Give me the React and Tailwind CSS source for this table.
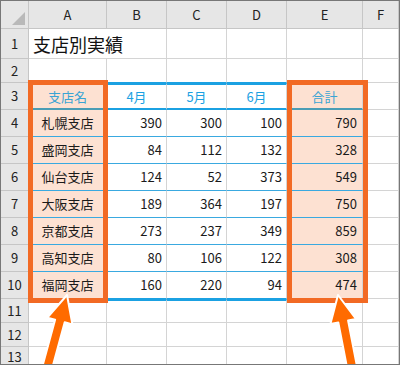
import React from "react";

const rows = [
  ["札幌支店", 390, 300, 100, 790],
  ["盛岡支店", 84, 112, 132, 328],
  ["仙台支店", 124, 52, 373, 549],
  ["大阪支店", 189, 364, 197, 750],
  ["京都支店", 273, 237, 349, 859],
  ["高知支店", 80, 106, 122, 308],
  ["福岡支店", 160, 220, 94, 474],
];

const cols = ["A", "B", "C", "D", "E", "F"];

function Hdr({ children, className = "" }) {
  return (
    <div
      className={
        "flex items-center justify-center bg-[#e6e6e6] border-r border-b border-r-[#c6c6c6] border-b-[#c6c6c6] text-[13px] text-[#222] " +
        className
      }
    >
      {children}
    </div>
  );
}

function Cell({ children, className = "", b = "border-b border-b-[#d4d4d4]", r = "border-r border-r-[#d4d4d4]" }) {
  return <div className={"flex items-center min-w-0 " + b + " " + r + " " + className}>{children}</div>;
}

export default function App() {
  const font = { fontFamily: '"Noto Sans CJK JP", "Noto Sans", sans-serif' };
  return (
    <div
      className="relative w-[400px] h-[365px] overflow-hidden border border-[#777] bg-white box-border"
      style={font}
    >
      <div className="grid h-full grid-cols-[28px_78px_60px_60px_60px_76px_1fr] grid-rows-[28px_30px_24px_repeat(8,27px)_24px_24px_1fr]">
        {/* header row */}
        <Hdr className="relative">
          <svg width="28" height="28" className="absolute inset-0">
            <polygon points="24,11 24,24 11,24" fill="#b9b9b9" />
          </svg>
        </Hdr>
        {cols.map((c) => (
          <Hdr key={c}>{c}</Hdr>
        ))}

        {/* row 1 */}
        <Hdr>1</Hdr>
        <Cell className="pl-[4px] pt-[2px] text-[18px] text-[#111] whitespace-nowrap overflow-visible" r="">
          支店別実績
        </Cell>
        <Cell />
        <Cell />
        <Cell />
        <Cell />
        <Cell />

        {/* row 2 */}
        <Hdr>2</Hdr>
        <Cell b="border-b border-b-[#1ba1e2]" />
        <Cell b="border-b border-b-[#1ba1e2]" />
        <Cell b="border-b border-b-[#1ba1e2]" />
        <Cell b="border-b border-b-[#1ba1e2]" />
        <Cell b="border-b border-b-[#1ba1e2]" />
        <Cell />

        {/* row 3 */}
        <Hdr>3</Hdr>
        <Cell
          className="justify-center bg-[#fde1d2] text-[13px] text-[#3aa4d4] border-t-2 border-t-[#1ba1e2]"
          b="border-b-2 border-b-[#4b9db5]"
        >
          支店名
        </Cell>
        {["4月", "5月", "6月"].map((m) => (
          <Cell
            key={m}
            className="justify-center text-[13px] text-[#1ba1e2] border-t-2 border-t-[#1ba1e2]"
            b="border-b-2 border-b-[#1ba1e2]"
          >
            {m}
          </Cell>
        ))}
        <Cell
          className="justify-center bg-[#fde1d2] text-[13px] text-[#3aa4d4] border-t-2 border-t-[#1ba1e2]"
          b="border-b-2 border-b-[#4b9db5]"
        >
          合計
        </Cell>
        <Cell />

        {/* data rows */}
        {rows.map((r, i) => {
          const last = i === rows.length - 1;
          const b = last ? "border-b border-b-[#1ba1e2]" : "border-b border-b-[#3aa9e0]";
          return (
            <React.Fragment key={r[0]}>
              <Hdr>{i + 4}</Hdr>
              <Cell className="justify-center bg-[#fde1d2] text-[13px] text-[#1a1a1a]" b={b}>
                {r[0]}
              </Cell>
              {r.slice(1, 4).map((v, j) => (
                <Cell key={j} className="justify-end pr-[4px] text-[13px] text-[#1a1a1a]" b={b}>
                  {v}
                </Cell>
              ))}
              <Cell className="justify-end pr-[5px] bg-[#fde1d2] text-[13px] text-[#1a1a1a]" b={b}>
                {r[4]}
              </Cell>
              <Cell />
            </React.Fragment>
          );
        })}

        {/* rows 11-13 */}
        {[11, 12, 13].map((n) => (
          <React.Fragment key={n}>
            <Hdr>{n}</Hdr>
            <Cell />
            <Cell className={n === 11 ? "border-t-2 border-t-[#1ba1e2]" : ""} />
            <Cell className={n === 11 ? "border-t-2 border-t-[#1ba1e2]" : ""} />
            <Cell className={n === 11 ? "border-t-2 border-t-[#1ba1e2]" : ""} />
            <Cell />
            <Cell />
          </React.Fragment>
        ))}
      </div>

      {/* orange highlight boxes */}
      <div className="absolute left-[27px] top-[79px] w-[80px] h-[223px] border-[5px] border-[#f26a24] pointer-events-none" />
      <div className="absolute left-[286px] top-[79px] w-[81px] h-[223px] border-[5px] border-[#f26a24] pointer-events-none" />

      {/* arrows */}
      <svg className="absolute left-[-1px] top-[-1px] pointer-events-none" width="400" height="365" viewBox="0 0 400 365">
        <polygon
          points="67,295 72.4,324.4 64.7,322.3 50.8,373.3 41.2,370.7 55.1,319.7 47.4,317.6"
          fill="#ff6b00"
          stroke="#ffffff"
          strokeWidth="2"
          strokeLinejoin="round"
        />
        <polygon
          points="338,295 356,319 348.1,320.5 358.2,372.6 348.4,374.6 338.3,322.5 330.4,324"
          fill="#ff6b00"
          stroke="#ffffff"
          strokeWidth="2"
          strokeLinejoin="round"
        />
      </svg>
    </div>
  );
}
